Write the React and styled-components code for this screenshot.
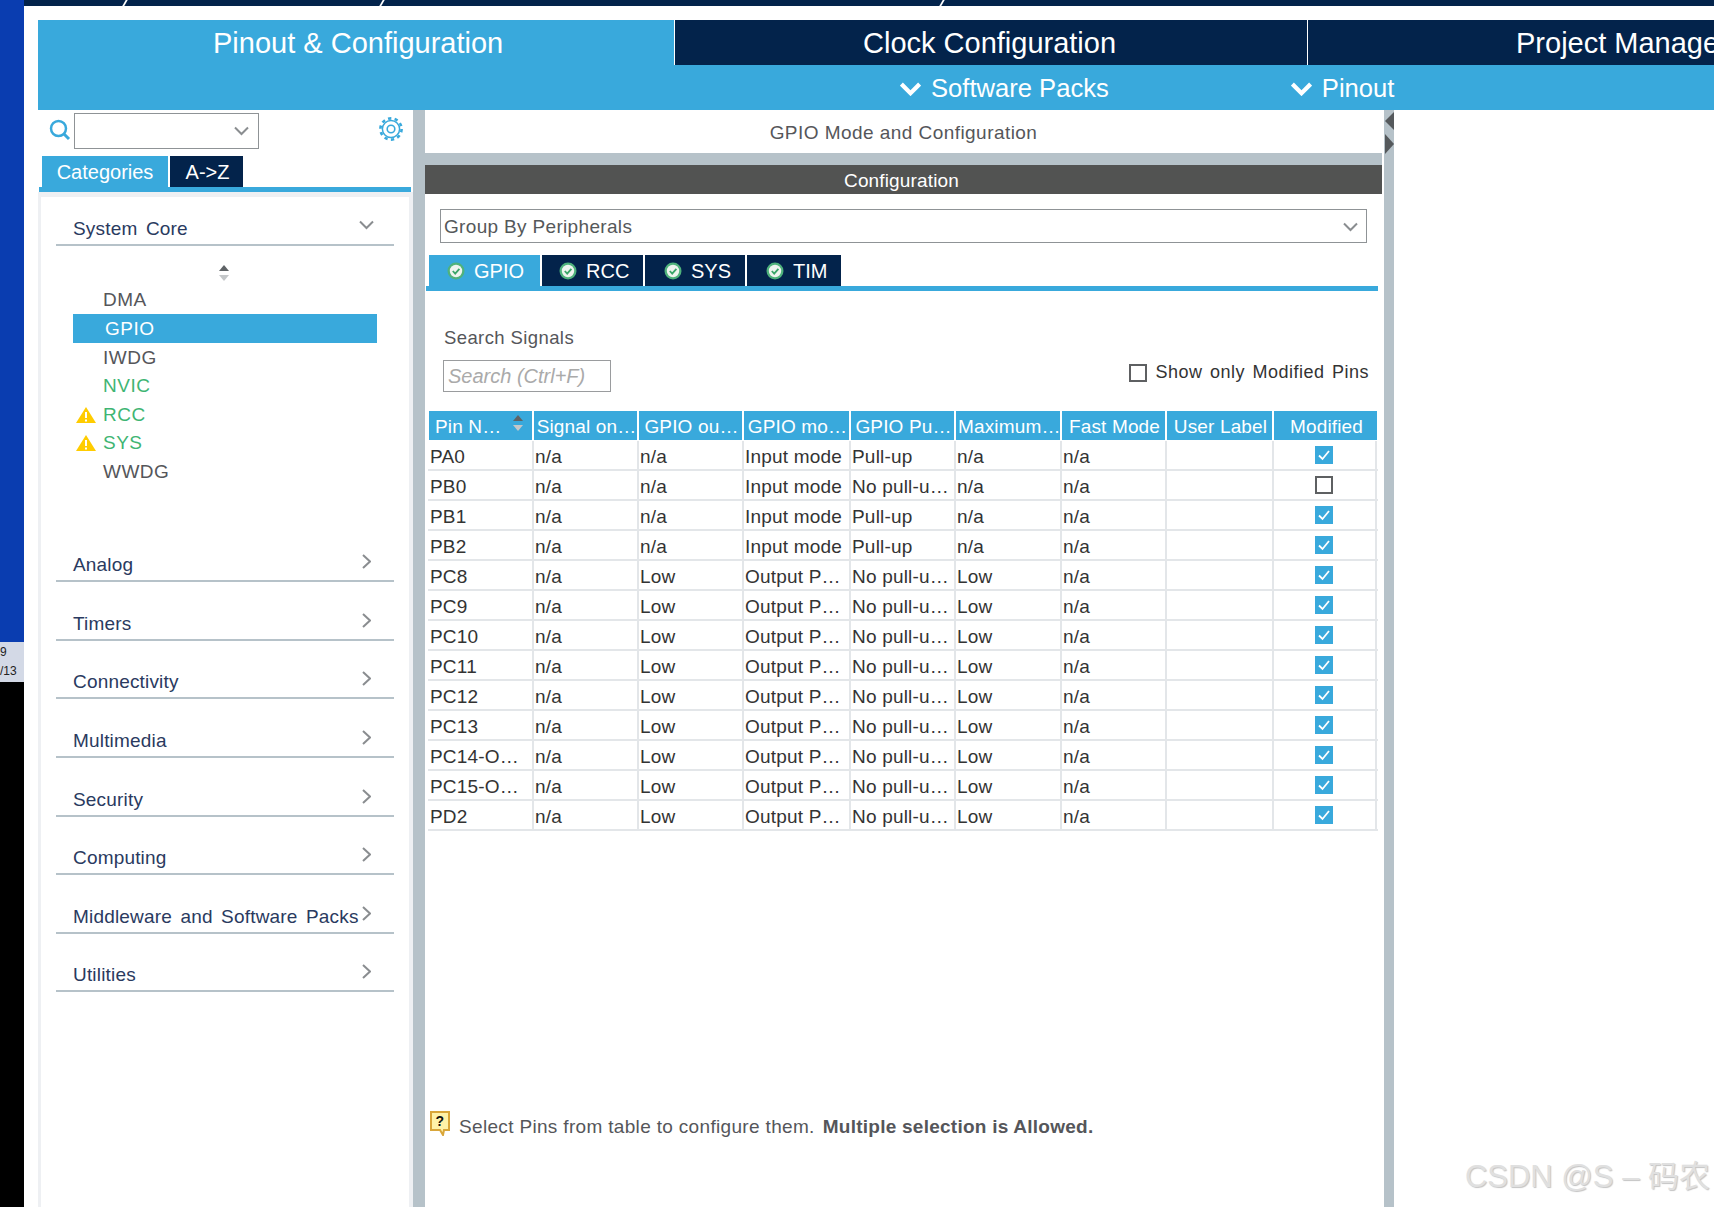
import React from 'react'
import styled, { createGlobalStyle } from 'styled-components'

const BLUE = '#39a9dc'
const NAVY = '#03234b'
const RULE = '#b6c2c9'
const COLUMNS = '105px 105px 105px 107px 105px 106px 105px 107px 103px'

const GlobalStyle = createGlobalStyle`
  html, body { margin: 0; padding: 0; background: #fff; }
  body { font-family: "Liberation Sans", Arial, sans-serif; }
`

const Page = styled.div`
  position: relative;
  display: flex;
  width: 1714px;
  height: 1207px;
  overflow: hidden;
  background: #fff;
`

const DesktopStrip = styled.div`
  width: 24px;
  flex: none;
  display: flex;
  flex-direction: column;
  background: #000;
`

const DesktopBlue = styled.div`
  height: 642px;
  background: #0a3db0;
`

const Clock = styled.div`
  height: 40px;
  background: #d3d9e6;
  color: #222;
  font-size: 12px;
  line-height: 19px;
  padding-top: 1px;
  box-sizing: border-box;
`

const Main = styled.div`
  flex: 1;
  min-width: 0;
  display: flex;
  flex-direction: column;
`

const TopEdge = styled.div`
  position: relative;
  height: 6px;
  background: ${NAVY};
`

const EdgeMark = styled.span`
  position: absolute;
  top: 0;
  left: ${(props) => props.left}px;
  width: 2px;
  height: 6px;
  background: #fff;
  transform: skewX(-30deg);
`

const Perspectives = styled.div`
  display: flex;
  height: 45px;
  margin: 14px 0 0 14px;
  overflow: hidden;
`

const Perspective = styled.div`
  flex: none;
  width: ${(props) => props.width}px;
  box-sizing: border-box;
  padding-left: ${(props) => props.inset}px;
  margin-right: 1px;
  background: ${(props) => (props.active ? BLUE : NAVY)};
  color: #fff;
  font-size: 29px;
  line-height: 47px;
  white-space: nowrap;
  overflow: hidden;
`

const SubBar = styled.div`
  display: flex;
  height: 45px;
  box-sizing: border-box;
  padding-top: 2px;
  margin-left: 14px;
  background: ${BLUE};
  color: #fff;
  font-size: 25.6px;
`

const SubItem = styled.div`
  display: flex;
  align-items: center;
  gap: 10px;
  margin-left: ${(props) => props.offset}px;
`

const Work = styled.div`
  flex: 1;
  min-height: 0;
  display: flex;
  margin-left: 14px;
`

const Sidebar = styled.div`
  width: 375px;
  flex: none;
  display: flex;
  flex-direction: column;
`

const SearchRow = styled.div`
  display: flex;
  align-items: flex-start;
  height: 46px;
  padding: 3px 0 0 10px;
  box-sizing: border-box;
`

const SearchIcon = styled.svg`
  width: 24px;
  height: 24px;
  margin-top: 5px;
  flex: none;
`

const SearchBox = styled.div`
  width: 185px;
  height: 36px;
  box-sizing: border-box;
  border: 1px solid #8f9396;
  display: flex;
  align-items: center;
  justify-content: flex-end;
  padding-right: 9px;
  margin-left: 2px;
`

const GearIcon = styled.svg`
  width: 26px;
  height: 26px;
  margin: 3px 0 0 119px;
  flex: none;
`

const SideTabs = styled.div`
  display: flex;
  gap: 2px;
  height: 31px;
  padding-left: 4px;
`

const SideTab = styled.div`
  width: ${(props) => props.width}px;
  box-sizing: border-box;
  padding-left: ${(props) => (props.active ? 0 : 2)}px;
  background: ${(props) => (props.active ? BLUE : NAVY)};
  color: #fff;
  font-size: 20px;
  line-height: 33px;
  text-align: center;
`

const BlueBar = styled.div`
  height: 5px;
  margin: 0 ${(props) => props.right}px 0 ${(props) => props.left}px;
  background: ${BLUE};
  flex: none;
`

const SidePanel = styled.div`
  flex: 1;
  border-left: 3px solid #eef0f3;
  border-right: 4px solid #eef0f3;
  border-top: 5px solid #eef0f3;
  padding: 0 15px;
`

const SectionHead = styled.div`
  display: flex;
  align-items: center;
  justify-content: space-between;
  height: 32px;
  box-sizing: content-box;
  margin-top: ${(props) => props.top}px;
  padding: 0 23px 0 17px;
  border-bottom: 2px solid ${RULE};
  color: #2a3a60;
  font-size: 19px;
  letter-spacing: 0.18px;
  word-spacing: 3px;
  white-space: nowrap;
`

const HeadLabel = styled.span`
  padding-top: 2px;
`

const HeadChevron = styled.svg`
  width: ${(props) => (props.down ? 15 : 9)}px;
  height: ${(props) => (props.down ? 10 : 15)}px;
  margin-bottom: ${(props) => (props.down ? 6 : 5)}px;
  margin-right: ${(props) => (props.down ? -3 : 0)}px;
  flex: none;
`

const SortMark = styled.svg`
  display: block;
  width: 14px;
  height: 16px;
  margin: 19px 0 0 161px;
`

const List = styled.div`
  margin: 4.6px 17px 0;
`

const ListRow = styled.div`
  display: flex;
  align-items: center;
  height: 28.6px;
  padding: 1px 0 0 3px;
  box-sizing: border-box;
  background: ${(props) => (props.active ? BLUE : 'transparent')};
  color: ${(props) => props.active ? '#fff' : props.green ? '#3fb573' : '#55565a'};
  font-size: 19px;
  letter-spacing: 0.5px;
`

const WarnSlot = styled.span`
  width: ${(props) => (props.active ? 29 : 27)}px;
  flex: none;
  display: flex;
`

const Separator = styled.div`
  width: ${(props) => props.width}px;
  flex: none;
  background: ${RULE};
  margin-left: ${(props) => props.gap}px;
  display: flex;
  flex-direction: column;
  align-items: center;
  gap: 4px;
  padding-top: ${(props) => (props.arrows ? 2 : 0)}px;
  box-sizing: border-box;
`

const Center = styled.div`
  width: 957px;
  flex: none;
  display: flex;
  flex-direction: column;
`

const PanelTitle = styled.div`
  height: 43px;
  line-height: 45px;
  text-align: center;
  color: #55565a;
  font-size: 19px;
  letter-spacing: 0.45px;
  border-bottom: 12px solid ${RULE};
  flex: none;
`

const ConfigBar = styled.div`
  height: 29px;
  line-height: 31px;
  text-align: center;
  padding-right: 4px;
  background: #525352;
  color: #fff;
  font-size: 19px;
  letter-spacing: 0.15px;
  flex: none;
`

const GroupSelect = styled.div`
  display: flex;
  align-items: center;
  justify-content: space-between;
  height: 34px;
  box-sizing: border-box;
  margin: 15px 15px 0 15px;
  padding: 2px 8px 0 3px;
  border: 1px solid #8f9396;
  color: #55585a;
  font-size: 19px;
  letter-spacing: 0.33px;
  flex: none;
`

const ModeTabs = styled.div`
  display: flex;
  gap: 2px;
  height: 31px;
  margin: 12px 0 0 4px;
  flex: none;
`

const ModeTab = styled.div`
  display: flex;
  align-items: center;
  gap: 9px;
  width: ${(props) => props.width}px;
  padding: 1px 0 0 ${(props) => props.inset}px;
  box-sizing: border-box;
  background: ${(props) => (props.active ? BLUE : NAVY)};
  color: #fff;
  font-size: 20px;
`

const Filters = styled.div`
  display: flex;
  justify-content: space-between;
  align-items: flex-end;
  height: 120px;
  box-sizing: border-box;
  padding: 0 13px 19px 18px;
  flex: none;
`

const FilterLabel = styled.div`
  color: #55565a;
  font-size: 18.5px;
  letter-spacing: 0.4px;
  margin: 0 0 11px 1px;
`

const SearchInput = styled.div`
  width: 168px;
  height: 32px;
  box-sizing: border-box;
  border: 1px solid #9a9c9e;
  padding-left: 4px;
  color: #aaa;
  font-size: 20px;
  font-style: italic;
  line-height: 30px;
`

const ModifiedFilter = styled.label`
  display: flex;
  align-items: center;
  gap: 8px;
  margin-bottom: 9px;
  color: #333;
  font-size: 18px;
  word-spacing: 2px;
  letter-spacing: 0.5px;
`

const EmptyBox = styled.span`
  display: block;
  width: 18px;
  height: 18px;
  box-sizing: border-box;
  border: 2px solid #5e6062;
  background: #fff;
`

const Table = styled.div`
  margin-left: 3px;
  width: 950px;
  flex: none;
`

const HeaderRow = styled.div`
  display: grid;
  grid-template-columns: ${COLUMNS};
  height: 29px;
  padding-left: 1px;
  margin-bottom: 1px;
`

const HeaderCell = styled.div`
  position: relative;
  margin-right: ${(props) => (props.last ? 0 : 2)}px;
  background: ${BLUE};
  color: #fff;
  font-size: 19px;
  letter-spacing: 0.15px;
  line-height: 31px;
  text-align: ${(props) => (props.left ? 'left' : 'center')};
  padding-left: ${(props) => (props.left ? 6 : 2)}px;
  box-sizing: border-box;
  white-space: nowrap;
  overflow: hidden;
`

const HeaderSort = styled.svg`
  position: absolute;
  right: 7px;
  top: 4px;
  width: 14px;
  height: 16px;
`

const BodyRow = styled.div`
  display: grid;
  grid-template-columns: ${COLUMNS};
  height: 30px;
  box-sizing: border-box;
  padding-left: 1px;
  border-bottom: 2px solid #e3e6e9;
`

const BodyCell = styled.div`
  display: flex;
  align-items: center;
  justify-content: ${(props) => (props.center ? 'center' : 'flex-start')};
  border-right: 2px solid #e3e6e9;
  padding-left: ${(props) => (props.center ? 0 : 1)}px;
  padding-right: ${(props) => (props.center ? 2 : 0)}px;
  padding-top: ${(props) => (props.center ? 0 : 4)}px;
  padding-bottom: ${(props) => (props.center ? 1 : 0)}px;
  color: #333;
  font-size: 19px;
  letter-spacing: 0.2px;
  white-space: nowrap;
  overflow: hidden;
`

const CheckedBox = styled.svg`
  display: block;
  width: 18px;
  height: 18px;
`

const Hint = styled.div`
  display: flex;
  align-items: flex-start;
  gap: 8px;
  margin: 283.5px 0 0 5px;
  color: #55565a;
  font-size: 19px;
  letter-spacing: 0.33px;
  line-height: 24px;
  white-space: nowrap;
`

const HintIcon = styled.svg`
  width: 21px;
  height: 25px;
  flex: none;
  margin-top: -4px;
`

const HintBold = styled.b`
  margin-left: 8px;
  letter-spacing: 0.25px;
`

const Watermark = styled.div`
  position: absolute;
  right: 4px;
  bottom: 12px;
  color: #e0e0e0;
  font-family: "Liberation Sans", "Noto Sans CJK SC", sans-serif;
  font-size: 31px;
  line-height: 36px;
  text-shadow: 1px 1px 1px #c4c4c4;
  white-space: nowrap;
`

function Chevron({ dir = 'down', color = '#8a8d90', width = 2 }) {
  return dir === 'down' ? (
    <path d="M1 1.5 L7.5 8 L14 1.5" fill="none" stroke={color} strokeWidth={width} />
  ) : (
    <path d="M1 1 L8 7.5 L1 14" fill="none" stroke={color} strokeWidth={width} />
  )
}

function DownMark({ color, width, w = 15, h = 10 }) {
  return (
    <svg width={w} height={h} viewBox="0 0 15 10" style={{ flex: 'none' }}>
      <Chevron color={color} width={width} />
    </svg>
  )
}

function SortGlyph() {
  return (
    <>
      <path d="M7 0 L12 6 H2 Z" fill="#5f6366" />
      <path d="M7 16 L12 10 H2 Z" fill="#c4c7c9" />
    </>
  )
}

function Warning() {
  return (
    <svg width="20" height="16" viewBox="0 0 20 16">
      <path d="M10 0 L20 16 H0 Z" fill="#ffcc00" />
      <rect x="9" y="5" width="2" height="6" fill="#fff" />
      <rect x="9" y="12.5" width="2" height="2" fill="#fff" />
    </svg>
  )
}

function OkBadge() {
  return (
    <svg width="18" height="18" viewBox="0 0 18 18" style={{ flex: 'none' }}>
      <circle cx="9" cy="9" r="8.5" fill="#4fb27c" />
      <circle cx="9" cy="9" r="6.2" fill="#eef4ef" />
      <path d="M5.8 9 L8.2 11.6 L12.4 6.8" fill="none" stroke="#3aa569" strokeWidth="1.8" />
    </svg>
  )
}

const rows = [
  ['PA0', 'n/a', 'n/a', 'Input mode', 'Pull-up', 'n/a', 'n/a', true],
  ['PB0', 'n/a', 'n/a', 'Input mode', 'No pull-u…', 'n/a', 'n/a', false],
  ['PB1', 'n/a', 'n/a', 'Input mode', 'Pull-up', 'n/a', 'n/a', true],
  ['PB2', 'n/a', 'n/a', 'Input mode', 'Pull-up', 'n/a', 'n/a', true],
  ['PC8', 'n/a', 'Low', 'Output P…', 'No pull-u…', 'Low', 'n/a', true],
  ['PC9', 'n/a', 'Low', 'Output P…', 'No pull-u…', 'Low', 'n/a', true],
  ['PC10', 'n/a', 'Low', 'Output P…', 'No pull-u…', 'Low', 'n/a', true],
  ['PC11', 'n/a', 'Low', 'Output P…', 'No pull-u…', 'Low', 'n/a', true],
  ['PC12', 'n/a', 'Low', 'Output P…', 'No pull-u…', 'Low', 'n/a', true],
  ['PC13', 'n/a', 'Low', 'Output P…', 'No pull-u…', 'Low', 'n/a', true],
  ['PC14-O…', 'n/a', 'Low', 'Output P…', 'No pull-u…', 'Low', 'n/a', true],
  ['PC15-O…', 'n/a', 'Low', 'Output P…', 'No pull-u…', 'Low', 'n/a', true],
  ['PD2', 'n/a', 'Low', 'Output P…', 'No pull-u…', 'Low', 'n/a', true],
]

const headers = ['Signal on…', 'GPIO ou…', 'GPIO mo…', 'GPIO Pu…', 'Maximum…', 'Fast Mode', 'User Label', 'Modified']

const categories = ['Analog', 'Timers', 'Connectivity', 'Multimedia', 'Security', 'Computing', 'Middleware and Software Packs', 'Utilities']

const peripherals = [
  { name: 'DMA' },
  { name: 'GPIO', active: true },
  { name: 'IWDG' },
  { name: 'NVIC', green: true },
  { name: 'RCC', green: true, warn: true },
  { name: 'SYS', green: true, warn: true },
  { name: 'WWDG' },
]

function App() {
  return (
    <Page>
      <GlobalStyle />
      <DesktopStrip>
        <DesktopBlue />
        <Clock>9<br />/13</Clock>
      </DesktopStrip>
      <Main>
        <TopEdge>
          <EdgeMark left={100} />
          <EdgeMark left={357} />
          <EdgeMark left={917} />
        </TopEdge>
        <Perspectives>
          <Perspective active width={636} inset={175}>Pinout &amp; Configuration</Perspective>
          <Perspective width={632} inset={188}>Clock Configuration</Perspective>
          <Perspective width={420} inset={208}>Project Manager</Perspective>
        </Perspectives>
        <SubBar>
          <SubItem offset={862}><DownMark color="#fff" width={3} w={21} h={14} />Software Packs</SubItem>
          <SubItem offset={182}><DownMark color="#fff" width={3} w={21} h={14} />Pinout</SubItem>
        </SubBar>
        <Work>
          <Sidebar>
            <SearchRow>
              <SearchIcon viewBox="0 0 24 24">
                <circle cx="10.5" cy="10.5" r="7.5" fill="none" stroke={BLUE} strokeWidth="2.5" />
                <path d="M16 16 L21 21" stroke={BLUE} strokeWidth="3" />
              </SearchIcon>
              <SearchBox><DownMark /></SearchBox>
              <GearIcon viewBox="0 0 26 26">
                <circle cx="13" cy="13" r="8.6" fill="none" stroke={BLUE} strokeWidth="1.5" />
                <circle cx="13" cy="13" r="3.8" fill="none" stroke={BLUE} strokeWidth="1.6" />
                <circle cx="13" cy="13" r="10.6" fill="none" stroke={BLUE} strokeWidth="2.6" strokeDasharray="3.33 3.33" />
              </GearIcon>
            </SearchRow>
            <SideTabs>
              <SideTab active width={126}>Categories</SideTab>
              <SideTab width={73}>A-&gt;Z</SideTab>
            </SideTabs>
            <BlueBar left={1} right={2} />
            <SidePanel>
              <SectionHead top={15}>
                <HeadLabel>System Core</HeadLabel>
                <HeadChevron down viewBox="0 0 15 10"><Chevron /></HeadChevron>
              </SectionHead>
              <SortMark viewBox="0 0 14 16"><SortGlyph /></SortMark>
              <List>
                {peripherals.map((p) => (
                  <ListRow key={p.name} active={p.active} green={p.green}>
                    <WarnSlot active={p.active}>{p.warn && <Warning />}</WarnSlot>
                    {p.name}
                  </ListRow>
                ))}
              </List>
              {categories.map((name, i) => (
                <SectionHead key={name} top={i === 0 ? 62.6 : 24.55}>
                  <HeadLabel>{name}</HeadLabel>
                  <HeadChevron viewBox="0 0 9 15"><Chevron dir="right" /></HeadChevron>
                </SectionHead>
              ))}
            </SidePanel>
          </Sidebar>
          <Separator width={12} gap={0} />
          <Center>
            <PanelTitle>GPIO Mode and Configuration</PanelTitle>
            <ConfigBar>Configuration</ConfigBar>
            <GroupSelect>Group By Peripherals<DownMark /></GroupSelect>
            <ModeTabs>
              <ModeTab active width={111} inset={18}><OkBadge />GPIO</ModeTab>
              <ModeTab width={101} inset={17}><OkBadge />RCC</ModeTab>
              <ModeTab width={100} inset={19}><OkBadge />SYS</ModeTab>
              <ModeTab width={94} inset={19}><OkBadge />TIM</ModeTab>
            </ModeTabs>
            <BlueBar left={1} right={4} />
            <Filters>
              <div>
                <FilterLabel>Search Signals</FilterLabel>
                <SearchInput>Search (Ctrl+F)</SearchInput>
              </div>
              <ModifiedFilter><EmptyBox />Show only Modified Pins</ModifiedFilter>
            </Filters>
            <Table>
              <HeaderRow>
                <HeaderCell left>
                  Pin N…
                  <HeaderSort viewBox="0 0 14 16"><SortGlyph /></HeaderSort>
                </HeaderCell>
                {headers.map((h, i) => (
                  <HeaderCell key={h} last={i === headers.length - 1}>{h}</HeaderCell>
                ))}
              </HeaderRow>
              {rows.map((row) => (
                <BodyRow key={row[0]}>
                  {row.slice(0, 7).map((value, i) => (
                    <BodyCell key={i}>{value}</BodyCell>
                  ))}
                  <BodyCell />
                  <BodyCell center>
                    {row[7] ? (
                      <CheckedBox viewBox="0 0 18 18">
                        <rect width="18" height="18" fill={BLUE} />
                        <path d="M4 9.5 L7.5 13 L14 5" fill="none" stroke="#fff" strokeWidth="1.8" />
                      </CheckedBox>
                    ) : (
                      <EmptyBox />
                    )}
                  </BodyCell>
                </BodyRow>
              ))}
            </Table>
            <Hint>
              <HintIcon viewBox="0 0 21 25">
                <path d="M1 1 H19 V19 H14 L13 24 L10 19 H1 Z" fill="#fff2a8" stroke="#d9a63a" strokeWidth="2" />
                <text x="10" y="15" textAnchor="middle" fontSize="14" fontWeight="700" fontFamily="Liberation Sans" fill="#111">?</text>
              </HintIcon>
              <span>
                Select Pins from table to configure them.
                <HintBold>Multiple selection is Allowed.</HintBold>
              </span>
            </Hint>
          </Center>
          <Separator width={10} gap={2} arrows>
            <svg width="9" height="18" viewBox="0 0 9 18"><path d="M9 0 V18 L0 9 Z" fill="#55595c" /></svg>
            <svg width="9" height="20" viewBox="0 0 9 20"><path d="M0 0 V20 L9 10 Z" fill="#55595c" /></svg>
          </Separator>
        </Work>
      </Main>
      <Watermark>CSDN @S – 码农</Watermark>
    </Page>
  )
}

export default App
